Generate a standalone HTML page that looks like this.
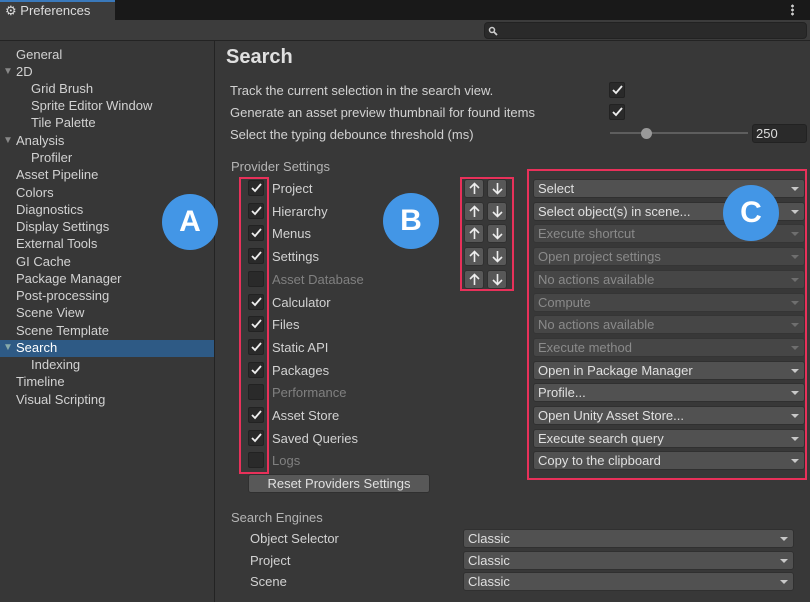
<!DOCTYPE html>
<html><head><style>
*{margin:0;padding:0;box-sizing:border-box}
body{width:810px;height:602px;background:#383838;font-family:"Liberation Sans",sans-serif;font-size:13px;color:#d2d2d2;position:relative;overflow:hidden}
.a{position:absolute;white-space:nowrap}
.t{line-height:17px}
.cb{position:absolute;width:16px;height:16px;background:#2a2a2a;border:1px solid #222;border-radius:2px}
.cb svg{position:absolute;left:2px;top:2px}
.dd{position:absolute;height:19px;background:#515151;border:1px solid #303030;border-radius:3px;color:#e0e0e0;padding-left:4px;line-height:17px}
.dd.dis{background:#464646;color:#8a8a8a;border-color:#353535}
.dd:after{content:"";position:absolute;right:5px;top:7px;border-left:4px solid transparent;border-right:4px solid transparent;border-top:4px solid #c8c8c8}
.dd.dis:after{border-top-color:#6e6e6e}
.ab{position:absolute;width:20px;height:19px;background:#585858;border:1px solid #303030;border-radius:3px}
.ab svg{position:absolute;left:4px;top:2px}
.circ{position:absolute;width:56px;height:56px;border-radius:50%;background:#4396e6;color:#fff;font-weight:bold;font-size:30px;text-align:center;line-height:56px}
.red{position:absolute;border:2px solid #e8315a}
.dim{color:#808080}
</style></head><body>
<div class="a" style="left:0;top:0;width:810px;height:20px;background:#191919"></div>
<div class="a" style="left:0;top:0;width:115px;height:20px;background:#3c3c3c;border-top:2px solid #3a79bb"></div>
<div class="a t" style="left:5px;top:2px;font-size:13px;color:#ddd"><span style="font-size:13px">⚙</span> Preferences</div>
<div class="a" style="left:791px;top:4px;width:3px;height:12px;background:radial-gradient(circle,#ccc 1.3px,transparent 1.5px) 0 0/3px 4px"></div>
<div class="a" style="left:0;top:20px;width:810px;height:21px;background:#3c3c3c;border-bottom:1px solid #232323"></div>
<div class="a" style="left:484px;top:22px;width:323px;height:17px;background:#2a2a2a;border:1px solid #222;border-radius:4px"></div>
<svg class="a" style="left:488px;top:26px" width="10" height="10"><circle cx="4" cy="4" r="2.5" stroke="#ccc" stroke-width="1.5" fill="none"/><line x1="6" y1="6" x2="9" y2="9" stroke="#ccc" stroke-width="1.8"/></svg>
<div class="a" style="left:0;top:41px;width:214px;height:561px;background:#373737"></div>
<div class="a" style="left:214px;top:41px;width:1px;height:561px;background:#232323"></div>
<div class="a" style="left:0;top:340px;width:214px;height:17px;background:#2e5a85"></div>
<div class="a t" style="left:16px;top:46px">General</div>
<div class="a t" style="left:16px;top:63px"><span style="position:absolute;left:-13px;top:0;color:#888;font-size:10px">▼</span>2D</div>
<div class="a t" style="left:31px;top:80px">Grid Brush</div>
<div class="a t" style="left:31px;top:97px">Sprite Editor Window</div>
<div class="a t" style="left:31px;top:114px">Tile Palette</div>
<div class="a t" style="left:16px;top:132px"><span style="position:absolute;left:-13px;top:0;color:#888;font-size:10px">▼</span>Analysis</div>
<div class="a t" style="left:31px;top:149px">Profiler</div>
<div class="a t" style="left:16px;top:166px">Asset Pipeline</div>
<div class="a t" style="left:16px;top:184px">Colors</div>
<div class="a t" style="left:16px;top:201px">Diagnostics</div>
<div class="a t" style="left:16px;top:218px">Display Settings</div>
<div class="a t" style="left:16px;top:235px">External Tools</div>
<div class="a t" style="left:16px;top:253px">GI Cache</div>
<div class="a t" style="left:16px;top:270px">Package Manager</div>
<div class="a t" style="left:16px;top:287px">Post-processing</div>
<div class="a t" style="left:16px;top:304px">Scene View</div>
<div class="a t" style="left:16px;top:322px">Scene Template</div>
<div class="a t" style="left:16px;top:339px;color:#fff"><span style="position:absolute;left:-13px;top:0;color:#8aa;font-size:10px">▼</span>Search</div>
<div class="a t" style="left:31px;top:356px">Indexing</div>
<div class="a t" style="left:16px;top:373px">Timeline</div>
<div class="a t" style="left:16px;top:391px">Visual Scripting</div>

<div class="a" style="left:226px;top:46px;font-size:20px;font-weight:bold;color:#e0e0e0">Search</div>
<div class="a t" style="left:230px;top:82px">Track the current selection in the search view.</div>
<div class="a t" style="left:230px;top:104px">Generate an asset preview thumbnail for found items</div>
<div class="a t" style="left:230px;top:126px">Select the typing debounce threshold (ms)</div>
<div class="cb" style="left:609px;top:82px"><svg width="11" height="10"><path d="M1 5 L4 8 L10 1" stroke="#eee" stroke-width="1.8" fill="none"/></svg></div>
<div class="cb" style="left:609px;top:104px"><svg width="11" height="10"><path d="M1 5 L4 8 L10 1" stroke="#eee" stroke-width="1.8" fill="none"/></svg></div>
<div class="a" style="left:610px;top:132px;width:138px;height:2px;background:#5e5e5e"></div>
<div class="a" style="left:641px;top:128px;width:11px;height:11px;border-radius:50%;background:#999"></div>
<div class="a" style="left:752px;top:124px;width:55px;height:19px;background:#2a2a2a;border:1px solid #222;border-radius:3px;padding-left:3px;line-height:17px;color:#ddd">250</div>

<div class="a t" style="left:231px;top:158px;color:#b4b4b4">Provider Settings</div>

<div id="rows"></div>
<div class="a" style="left:248px;top:474px;width:182px;height:19px;background:#585858;border:1px solid #303030;border-radius:3px;text-align:center;line-height:17px;color:#e0e0e0">Reset Providers Settings</div>

<div class="a t" style="left:231px;top:509px;color:#b4b4b4">Search Engines</div>
<div class="a t" style="left:250px;top:530px">Object Selector</div>
<div class="a t" style="left:250px;top:552px">Project</div>
<div class="a t" style="left:250px;top:573px">Scene</div>
<div class="dd" style="left:463px;top:529px;width:331px">Classic</div>
<div class="dd" style="left:463px;top:551px;width:331px">Classic</div>
<div class="dd" style="left:463px;top:572px;width:331px">Classic</div>

<div class="red" style="left:239px;top:177px;width:30px;height:297px"></div>
<div class="red" style="left:460px;top:177px;width:54px;height:114px"></div>
<div class="red" style="left:527px;top:169px;width:280px;height:311px"></div>
<div class="circ" style="left:162px;top:194px">A</div>
<div class="circ" style="left:383px;top:193px">B</div>
<div class="circ" style="left:723px;top:185px">C</div>

<script>
var up='<svg width="11" height="13"><path d="M5.5 12 V2 M1 6 L5.5 1.5 L10 6" stroke="#eee" stroke-width="1.6" fill="none"/></svg>';
var dn='<svg width="11" height="13"><path d="M5.5 1 V11 M1 7 L5.5 11.5 L10 7" stroke="#eee" stroke-width="1.6" fill="none"/></svg>';
var d=[["Project",1,"Select",0,1],["Hierarchy",1,"Select object(s) in scene...",0,1],["Menus",1,"Execute shortcut",1,1],["Settings",1,"Open project settings",1,1],["Asset Database",0,"No actions available",1,1],["Calculator",1,"Compute",1,0],["Files",1,"No actions available",1,0],["Static API",1,"Execute method",1,0],["Packages",1,"Open in Package Manager",0,0],["Performance",0,"Profile...",0,0],["Asset Store",1,"Open Unity Asset Store...",0,0],["Saved Queries",1,"Execute search query",0,0],["Logs",0,"Copy to the clipboard",0,0]];
var h="";
d.forEach(function(r,i){var y=Math.round(180+i*22.7);
h+='<div class="cb" style="left:248px;top:'+y+'px">'+(r[1]?'<svg width="11" height="10"><path d="M1 5 L4 8 L10 1" stroke="#eee" stroke-width="1.8" fill="none"/></svg>':'')+'</div>';
h+='<div class="a t'+(r[1]?'':' dim')+'" style="left:272px;top:'+y+'px">'+r[0]+'</div>';
h+='<div class="dd'+(r[3]?' dis':'')+'" style="left:533px;top:'+(y-1)+'px;width:272px">'+r[2]+'</div>';
if(r[4])h+='<div class="ab" style="left:464px;top:'+(y-1)+'px">'+up+'</div><div class="ab" style="left:487px;top:'+(y-1)+'px">'+dn+'</div>';
});
document.getElementById("rows").outerHTML=h;
</script>
</body></html>
